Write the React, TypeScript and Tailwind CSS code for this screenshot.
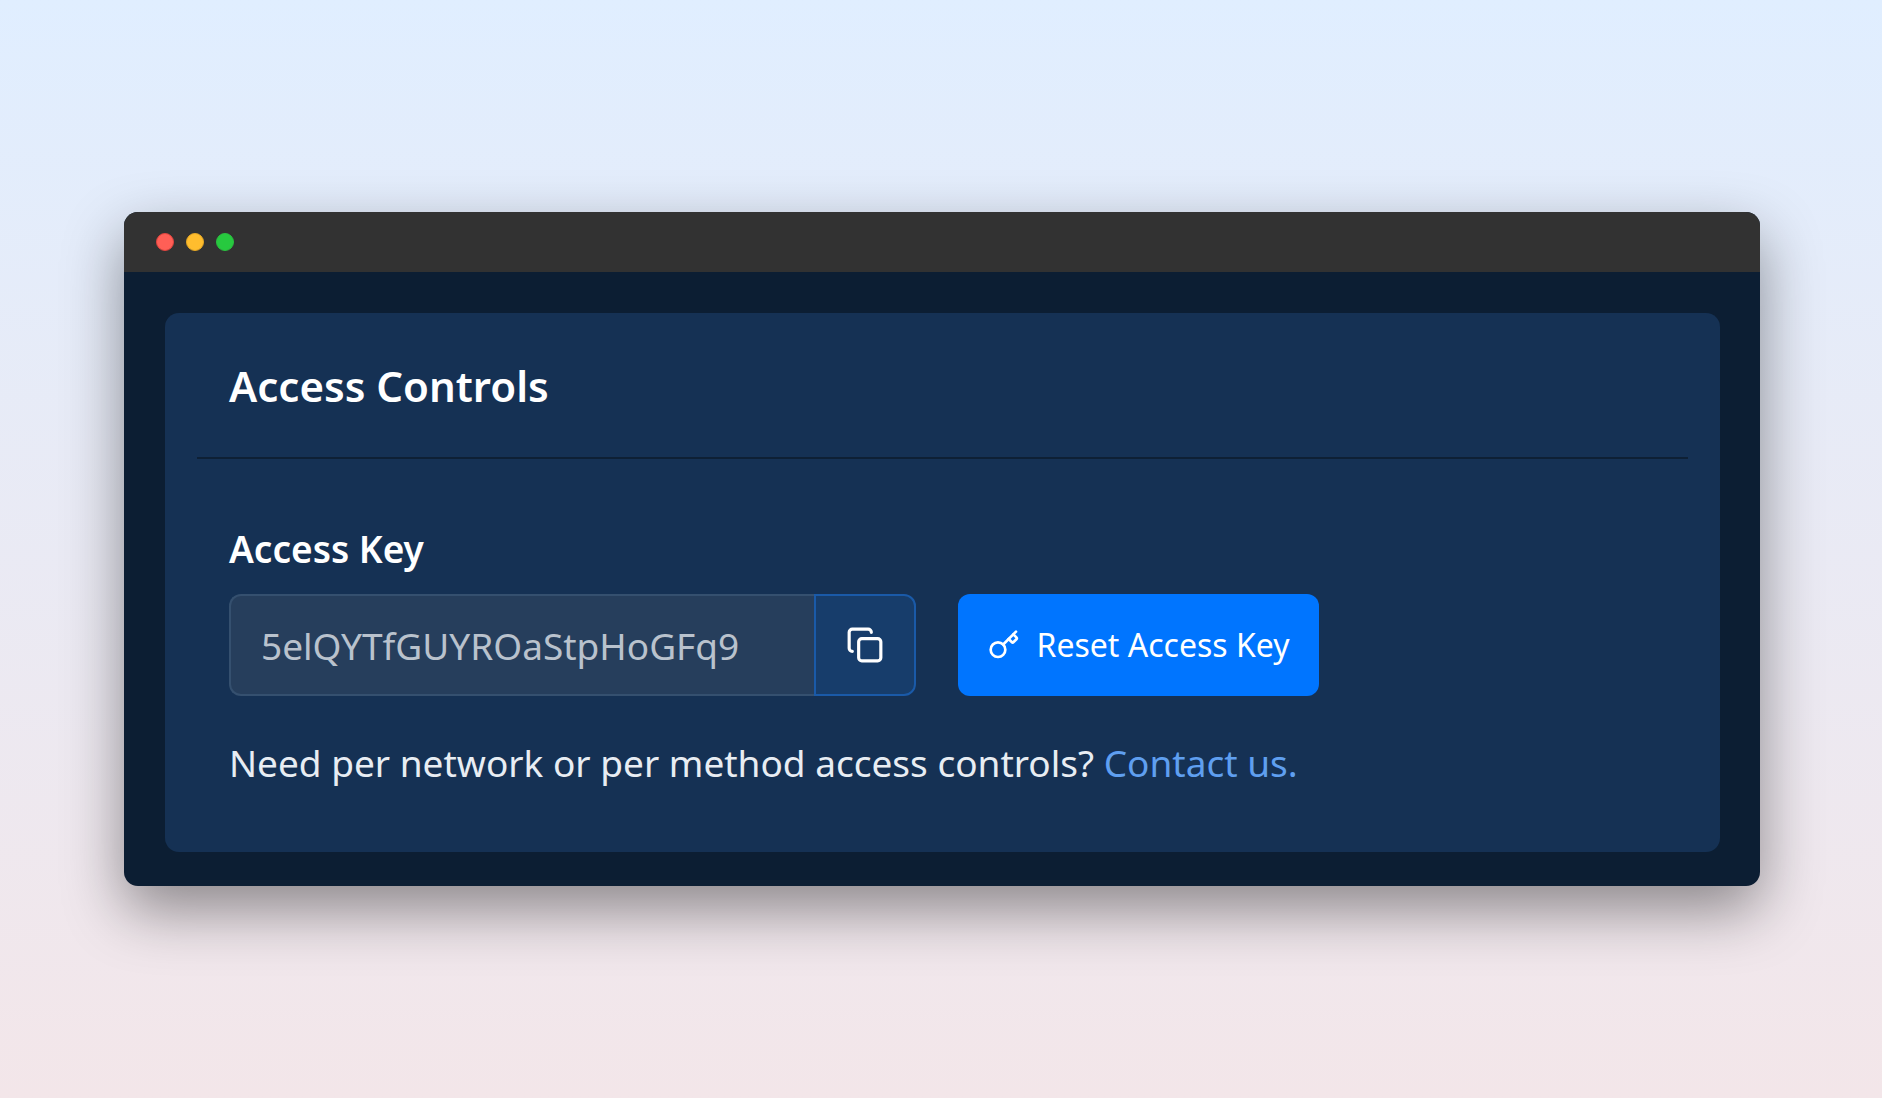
import { Copy, Key } from 'lucide-react'

export default function App() {
  return (
    <div className="h-[1098px] overflow-hidden flex items-center pl-[124px] bg-gradient-to-b from-[#e0eeff] to-[#f3e6e9] font-['Noto_Sans',sans-serif]">
      <div className="w-[1636px] h-[674px] flex flex-col rounded-[14px] overflow-hidden bg-[#0c1e33] shadow-[0_24px_60px_rgba(0,0,0,0.42)]">
        {/* title bar */}
        <div className="h-[60px] shrink-0 bg-[#323232] flex items-center gap-3 pl-8 pb-px">
          <span className="w-[18px] h-[18px] rounded-full bg-[#ff5f56] border border-[#e0443e]" />
          <span className="w-[18px] h-[18px] rounded-full bg-[#ffbd2e] border border-[#e6a825]" />
          <span className="w-[18px] h-[18px] rounded-full bg-[#27c93f] border border-[#2ac03f]" />
        </div>

        <div className="flex-1 pt-[41px] pr-10 pl-[41px] pb-[34px]">
          <div className="h-full rounded-[14px] bg-[#153154] px-8">
            <div className="h-[146px] border-b-2 border-[#0e2035] pl-[32px] pt-[44px]">
              <h1 className="text-[42px] leading-[58px] font-semibold text-white">Access Controls</h1>
            </div>

            <div className="pl-[32px] pt-[65px]">
              <div className="text-[37px] leading-[50px] font-semibold text-white mb-[20px]">Access Key</div>

              <div className="flex items-center gap-[42px]">
                <div className="w-[687px] h-[102px] flex">
                  <div className="flex-1 flex items-center pl-[30px] pt-[2px] rounded-l-[12px] border-2 border-r-0 border-[#35506f] bg-[#263e5c] text-[37px] text-[#b9c2cd]">
                    5elQYTfGUYROaStpHoGFq9
                  </div>
                  <button className="w-[102px] flex items-center justify-center rounded-r-[12px] bg-[#173d6b] border-2 border-[#1a5aa8] text-white">
                    <Copy className="w-[38px] h-[38px]" strokeWidth={2} />
                  </button>
                </div>

                <button className="w-[361px] h-[102px] rounded-[12px] bg-[#0075ff] flex items-center justify-center gap-[17px] text-white text-[32px]">
                  <Key className="w-[32px] h-[32px]" strokeWidth={2} />
                  Reset Access Key
                </button>
              </div>

              <p className="mt-[41px] text-[37px] leading-[52px] text-[#e8edf3]">
                Need per network or per method access controls?{' '}
                <a className="text-[#5f9ff0]">Contact us.</a>
              </p>
            </div>
          </div>
        </div>
      </div>
    </div>
  )
}
